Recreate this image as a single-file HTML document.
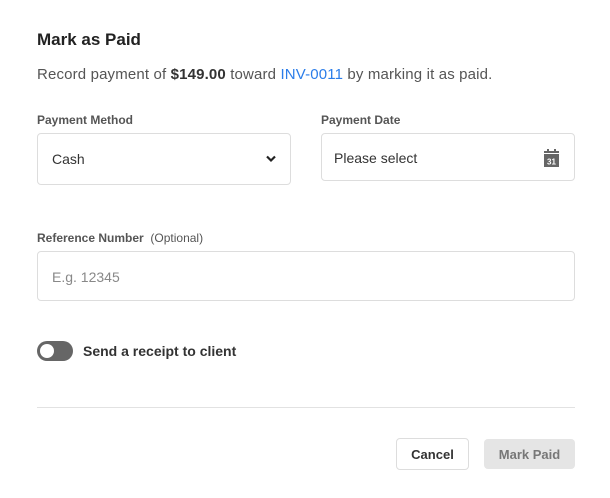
<!DOCTYPE html>
<html><head><style>
body{margin:0;width:610px;height:498px;background:#fff;font-family:"Liberation Sans",sans-serif;color:#222;position:relative;overflow:hidden}
.a{position:absolute}
.box{position:absolute;border:1px solid #ddd;border-radius:4px;box-sizing:border-box;background:#fff}
.lbl{font-size:12px;font-weight:bold;color:#555}
</style></head><body>
<div class="a" style="left:37px;top:30px;font-size:17px;font-weight:bold;color:#222">Mark as Paid</div>
<div class="a" style="left:37px;top:66px;font-size:15px;letter-spacing:0.15px;color:#555">Record payment of <b style="color:#333">$149.00</b> toward <span style="color:#2b7de9">INV-0011</span> by marking it as paid.</div>
<div class="a lbl" style="left:37px;top:113px">Payment Method</div>
<div class="a lbl" style="left:321px;top:113px">Payment Date</div>
<div class="box" style="left:37px;top:133px;width:254px;height:52px"></div>
<div class="a" style="left:52px;top:151px;font-size:14px;color:#333">Cash</div>
<svg class="a" style="left:265px;top:154px" width="12" height="10" viewBox="0 0 12 10"><path d="M2 2.5 L6 6.5 L10 2.5" stroke="#222" stroke-width="2.2" fill="none"/></svg>
<div class="box" style="left:321px;top:133px;width:254px;height:48px"></div>
<div class="a" style="left:334px;top:150px;font-size:14px;color:#333">Please select</div>
<svg class="a" style="left:543px;top:148px" width="17" height="19" viewBox="0 0 17 19"><rect x="1" y="3" width="15" height="16" fill="#666"/><rect x="4" y="1" width="2" height="3" fill="#666"/><rect x="11" y="1" width="2" height="3" fill="#666"/><rect x="1" y="5" width="15" height="1" fill="#fff"/><text x="8.5" y="16.5" font-size="8" font-weight="bold" fill="#fff" text-anchor="middle" font-family="Liberation Sans">31</text></svg>
<div class="a" style="left:37px;top:231px;font-size:12px;color:#555"><b>Reference Number</b>&nbsp; (Optional)</div>
<div class="box" style="left:37px;top:251px;width:538px;height:50px"></div>
<div class="a" style="left:52px;top:269px;font-size:14px;color:#888">E.g. 12345</div>
<div class="a" style="left:37px;top:341px;width:36px;height:20px;border-radius:10px;background:#666"></div>
<div class="a" style="left:40px;top:344px;width:14px;height:14px;border-radius:7px;background:#fff"></div>
<div class="a" style="left:83px;top:343px;font-size:14px;font-weight:bold;color:#333">Send a receipt to client</div>
<div class="a" style="left:37px;top:407px;width:538px;height:1px;background:#e2e2e2"></div>
<div class="box" style="left:396px;top:438px;width:73px;height:32px;display:flex;align-items:center;justify-content:center;font-size:13px;font-weight:bold;color:#333">Cancel</div>
<div class="a" style="left:484px;top:439px;width:91px;height:30px;border-radius:4px;background:#e5e5e5;display:flex;align-items:center;justify-content:center;font-size:13px;font-weight:bold;color:#777">Mark Paid</div>
</body></html>
